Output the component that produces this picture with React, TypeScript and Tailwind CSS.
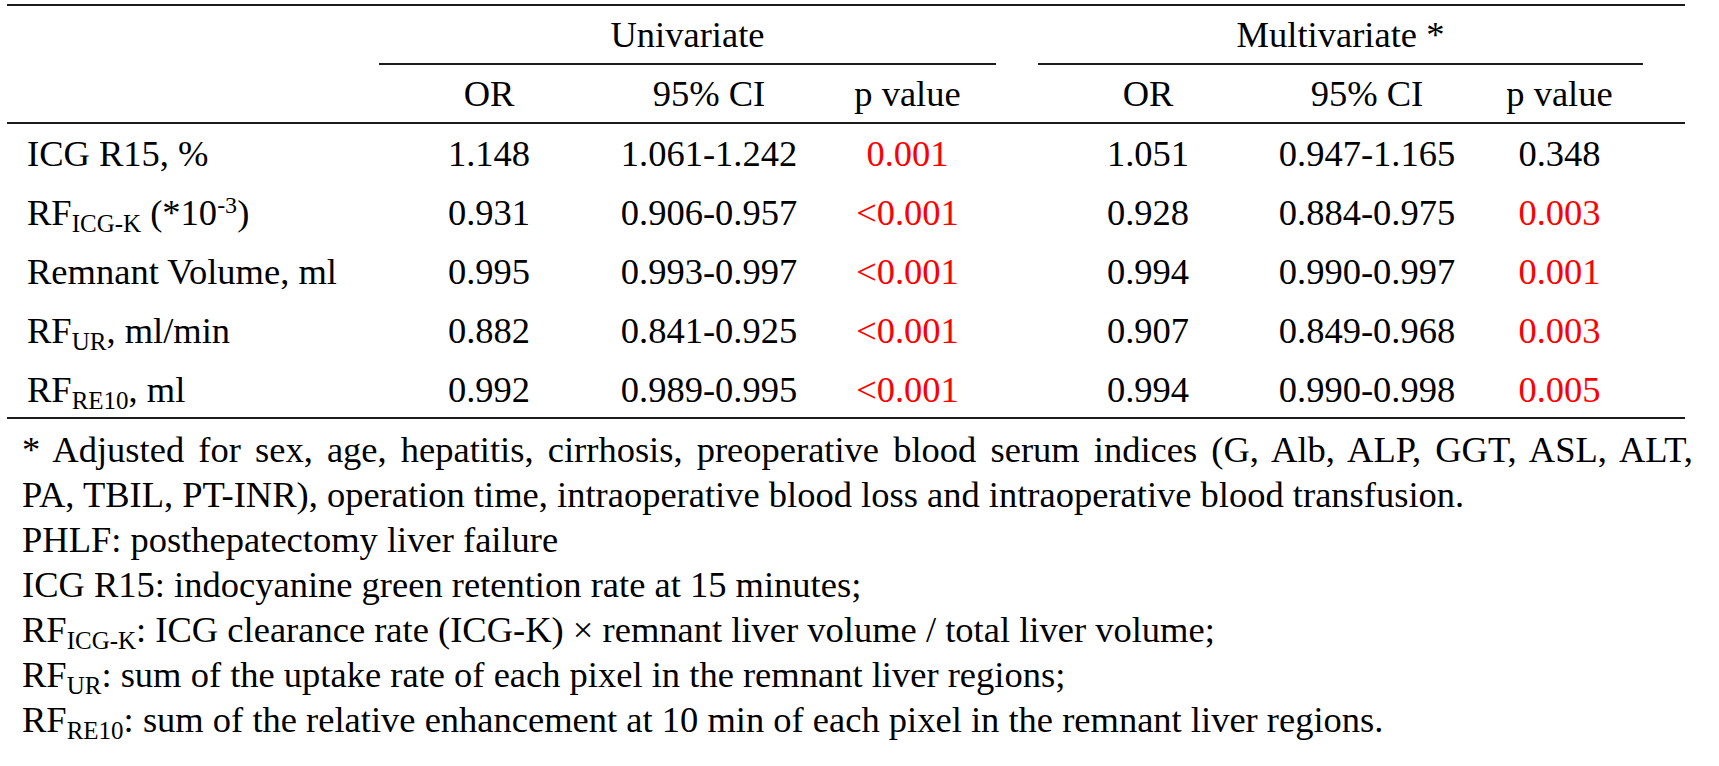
import React from "react";

type Row = {
  label: React.ReactNode;
  uni: [string, string, string];
  multi: [string, string, string];
  uniRed: boolean;
  multiRed: boolean;
};

function Sub({ children }: { children: React.ReactNode }) {
  return <span className="relative top-[7px] text-[25px] leading-none">{children}</span>;
}

function Sup({ children }: { children: React.ReactNode }) {
  return <span className="relative -top-[12px] text-[24px] leading-none">{children}</span>;
}

const rows: Row[] = [
  {
    label: <>ICG R15, %</>,
    uni: ["1.148", "1.061-1.242", "0.001"],
    multi: ["1.051", "0.947-1.165", "0.348"],
    uniRed: true,
    multiRed: false,
  },
  {
    label: (
      <>
        RF<Sub>ICG-K</Sub> (*10<Sup>-3</Sup>)
      </>
    ),
    uni: ["0.931", "0.906-0.957", "<0.001"],
    multi: ["0.928", "0.884-0.975", "0.003"],
    uniRed: true,
    multiRed: true,
  },
  {
    label: <>Remnant Volume, ml</>,
    uni: ["0.995", "0.993-0.997", "<0.001"],
    multi: ["0.994", "0.990-0.997", "0.001"],
    uniRed: true,
    multiRed: true,
  },
  {
    label: (
      <>
        RF<Sub>UR</Sub>, ml/min
      </>
    ),
    uni: ["0.882", "0.841-0.925", "<0.001"],
    multi: ["0.907", "0.849-0.968", "0.003"],
    uniRed: true,
    multiRed: true,
  },
  {
    label: (
      <>
        RF<Sub>RE10</Sub>, ml
      </>
    ),
    uni: ["0.992", "0.989-0.995", "<0.001"],
    multi: ["0.994", "0.990-0.998", "0.005"],
    uniRed: true,
    multiRed: true,
  },
];

const cols = "grid grid-cols-[372px_220px_220px_177px_42px_220px_218px_167px_42px]";

function DataRow({ row, last }: { row: Row; last: boolean }) {
  const p = (red: boolean) => (red ? "text-center text-[#f00]" : "text-center");
  return (
    <div className={`${cols} ${last ? "h-[57px]" : "h-[59px]"} leading-[59px] whitespace-nowrap`}>
      <div className="pl-[20px]">{row.label}</div>
      <div className="text-center">{row.uni[0]}</div>
      <div className="text-center">{row.uni[1]}</div>
      <div className={p(row.uniRed)}>{row.uni[2]}</div>
      <div />
      <div className="text-center">{row.multi[0]}</div>
      <div className="text-center">{row.multi[1]}</div>
      <div className={p(row.multiRed)}>{row.multi[2]}</div>
      <div />
    </div>
  );
}

export default function App() {
  return (
    <div className="min-h-screen w-full bg-white pt-[4px] font-['Liberation_Serif','Times_New_Roman',serif] text-[36.5px] text-black">
      {/* table */}
      <div className="ml-[7px] w-[1678px] border-t-2 border-b-2 border-[#1c1c1c]">
        <div className={`${cols} h-[59px] leading-[57px]`}>
          <div />
          <div className="col-span-3 border-b-2 border-[#1c1c1c] text-center">Univariate</div>
          <div />
          <div className="col-span-3 border-b-2 border-[#1c1c1c] text-center">Multivariate *</div>
          <div />
        </div>
        <div className={`${cols} h-[59px] border-b-2 border-[#1c1c1c] leading-[58px]`}>
          <div />
          <div className="text-center">OR</div>
          <div className="text-center">95% CI</div>
          <div className="text-center">p value</div>
          <div />
          <div className="text-center">OR</div>
          <div className="text-center">95% CI</div>
          <div className="text-center">p value</div>
          <div />
        </div>
        {rows.map((r, i) => (
          <DataRow key={i} row={r} last={i === rows.length - 1} />
        ))}
      </div>

      {/* footnotes */}
      <div className="mt-[8px] pl-[22px] leading-[45px] whitespace-nowrap">
        <div className="w-[1671px] text-justify [text-align-last:justify]">
          * Adjusted for sex, age, hepatitis, cirrhosis, preoperative blood serum indices (G, Alb, ALP, GGT, ASL, ALT,
        </div>
        <div>
          PA, TBIL, PT-INR), operation time, intraoperative blood loss and intraoperative blood transfusion.
        </div>
        <div>PHLF: posthepatectomy liver failure</div>
        <div>ICG R15: indocyanine green retention rate at 15 minutes;</div>
        <div>
          RF<Sub>ICG-K</Sub>: ICG clearance rate (ICG-K) × remnant liver volume / total liver volume;
        </div>
        <div>
          RF<Sub>UR</Sub>: sum of the uptake rate of each pixel in the remnant liver regions;
        </div>
        <div>
          RF<Sub>RE10</Sub>: sum of the relative enhancement at 10 min of each pixel in the remnant liver regions.
        </div>
      </div>
    </div>
  );
}
